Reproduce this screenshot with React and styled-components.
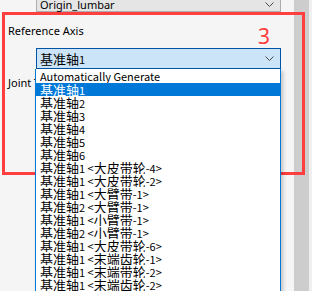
import React from 'react';
import styled, { createGlobalStyle } from 'styled-components';

const GlobalStyle = createGlobalStyle`
  html, body {
    margin: 0;
    padding: 0;
    background: #f5f5f5;
  }
  body {
    font-family: 'Noto Sans', 'Noto Sans CJK SC', sans-serif;
    font-size: 11px;
    color: #000;
  }
`;

const Page = styled.div`
  display: flex;
  width: 312px;
  height: 291px;
  overflow: hidden;
`;

const Panel = styled.div`
  position: relative;
  width: 294px;
  display: flex;
  flex-direction: column;
  padding-left: 8px;
  box-sizing: border-box;
  background: #f5f5f5;
`;

const Scrollbar = styled.div`
  width: 18px;
  background: #f0f0f0;
  display: flex;
`;

const Thumb = styled.div`
  width: 15px;
  background: #cdcdcd;
`;

const Combo = styled.div`
  display: flex;
  align-items: ${(p) => (p.$open ? 'center' : 'flex-end')};
  justify-content: space-between;
  margin-left: 28px;
  width: 245px;
  height: 21px;
  box-sizing: border-box;
  padding: 0 6px 0 3px;
  border: 1px solid ${(p) => (p.$open ? '#0054a6' : '#adadad')};
  background: ${(p) => (p.$open ? '#cce4f7' : '#e5e5e5')};
  margin-top: ${(p) => p.$top}px;
  white-space: nowrap;
  svg {
    align-self: center;
    margin-top: ${(p) => (p.$open ? 0 : 5)}px;
  }
`;

const ComboText = styled.span`
  line-height: 12px;
`;

const ListText = styled.span`
  font-family: 'Noto Sans CJK SC', sans-serif;
  font-size: 11px;
`;

const Han = styled.span`
  font-size: 13px;
`;

const Label = styled.div`
  line-height: 16px;
  margin-top: ${(p) => p.$top}px;
  white-space: nowrap;
`;

const DropList = styled.div`
  position: absolute;
  left: 35px;
  top: 69px;
  width: 246px;
  bottom: -20px;
  box-sizing: border-box;
  border: 1px solid #0078d7;
  border-top: none;
  background: #fff;
  box-shadow: 2px 2px 4px rgba(0, 0, 0, 0.22);
  padding-top: 1px;
`;

const Option = styled.div`
  height: 13px;
  line-height: 13px;
  padding-left: 4px;
  overflow: hidden;
  white-space: nowrap;
  color: ${(p) => (p.$selected ? '#fff' : '#000')};
  background: ${(p) => (p.$selected ? '#0078d7' : 'transparent')};
`;

const Annotation = styled.div`
  position: absolute;
  left: 2px;
  top: 12px;
  width: 303px;
  height: 163px;
  box-sizing: border-box;
  border: 3px solid #ff3f3f;
  pointer-events: none;
`;

const Marker = styled.span`
  position: absolute;
  left: 253px;
  top: 9px;
  font-family: 'Noto Sans', sans-serif;
  font-size: 21px;
  line-height: 24px;
  color: #ff3f3f;
`;

const Chevron = () => (
  <svg width="9" height="5" viewBox="0 0 9 5">
    <path d="M0.5 0.5 L4.5 4.5 L8.5 0.5" fill="none" stroke="#4a4a4a" strokeWidth="1" />
  </svg>
);

// chinese runs are set a bit larger than the latin ones, as the Windows UI font does
const Mixed = ({ text }) => (
  <ListText>
    {text.split(/([\u4e00-\u9fff]+)/).map((part, i) =>
      /[\u4e00-\u9fff]/.test(part) ? <Han key={i}>{part}</Han> : part
    )}
  </ListText>
);

const options = [
  'Automatically Generate',
  '基准轴1',
  '基准轴2',
  '基准轴3',
  '基准轴4',
  '基准轴5',
  '基准轴6',
  '基准轴1 <大皮带轮-4>',
  '基准轴1 <大皮带轮-2>',
  '基准轴1 <大臂带-1>',
  '基准轴2 <大臂带-1>',
  '基准轴1 <小臂带-1>',
  '基准轴2 <小臂带-1>',
  '基准轴1 <大皮带轮-6>',
  '基准轴1 <末端齿轮-1>',
  '基准轴1 <末端带轮-2>',
  '基准轴1 <末端齿轮-2>',
];

export default function App() {
  return (
    <Page>
      <GlobalStyle />
      <Panel>
        <Combo $top={-9}>
          <ComboText>Origin_lumbar</ComboText>
          <Chevron />
        </Combo>
        <Label $top={11}>Reference Axis</Label>
        <Combo $open $top={9}>
          <Mixed text="基准轴1" />
          <Chevron />
        </Combo>
        <Label $top={6}>Joint Type</Label>
        <Annotation>
          <Marker>3</Marker>
        </Annotation>
        <DropList>
          {options.map((o, i) => (
            <Option key={i} $selected={i === 1}>
              <Mixed text={o} />
            </Option>
          ))}
        </DropList>
      </Panel>
      <Scrollbar>
        <Thumb />
      </Scrollbar>
    </Page>
  );
}
